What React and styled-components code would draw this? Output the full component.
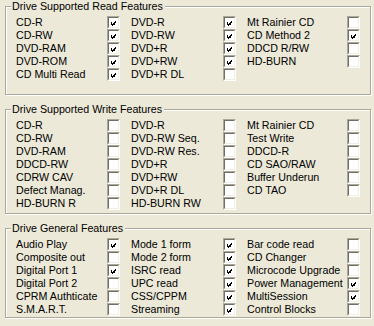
import React from 'react';
import styled, {createGlobalStyle} from "styled-components";

const GlobalStyle = createGlobalStyle`
  html, body {
    margin: 0;
    padding: 0;
    background: #ece9d8;
  }
  body {
    font-family: "Liberation Sans", Arial, sans-serif;
    font-size: 10.7px;
    color: #000;
  }
`;

//feature lists, [label, checked]
const groups = [
    {
        title: "Drive Supported Read Features",
        bottom: 13,
        columns: [
            [["CD-R", true], ["CD-RW", true], ["DVD-RAM", true], ["DVD-ROM", true], ["CD Multi Read", true]],
            [["DVD-R", true], ["DVD-RW", true], ["DVD+R", true], ["DVD+RW", true], ["DVD+R DL", false]],
            [["Mt Rainier CD", false], ["CD Method 2", true], ["DDCD R/RW", false], ["HD-BURN", false]],
        ],
    },
    {
        title: "Drive Supported Write Features",
        bottom: 3,
        columns: [
            [["CD-R", false], ["CD-RW", false], ["DVD-RAM", false], ["DDCD-RW", false], ["CDRW CAV", false], ["Defect Manag.", false], ["HD-BURN R", false]],
            [["DVD-R", false], ["DVD-RW Seq.", false], ["DVD-RW Res.", false], ["DVD+R", false], ["DVD+RW", false], ["DVD+R DL", false], ["HD-BURN RW", false]],
            [["Mt Rainier CD", false], ["Test Write", false], ["DDCD-R", false], ["CD SAO/RAW", false], ["Buffer Underun", false], ["CD TAO", false]],
        ],
    },
    {
        title: "Drive General Features",
        bottom: 1,
        columns: [
            [["Audio Play", true], ["Composite out", false], ["Digital Port 1", true], ["Digital Port 2", false], ["CPRM Authticate", false], ["S.M.A.R.T.", false]],
            [["Mode 1 form", true], ["Mode 2 form", true], ["ISRC read", true], ["UPC read", true], ["CSS/CPPM", true], ["Streaming", true]],
            [["Bar code read", false], ["CD Changer", false], ["Microcode Upgrade", false], ["Power Management", true], ["MultiSession", true], ["Control Blocks", false]],
        ],
    },
];

const CheckMark = () => (
    <svg width="7" height="7" viewBox="0 0 7 7" shapeRendering="crispEdges">
        <path
            fill="#000"
            d="M6 0h1v1h-1z M5 1h2v1h-2z M0 2h1v1h-1z M4 2h3v1h-3z M0 3h2v1h-2z M3 3h3v1h-3z M0 4h5v1h-5z M1 5h3v1h-3z M2 6h1v1h-1z"
        />
    </svg>
);

const Check = ({checked}) => (
    <StyledBox>
        <StyledFace>{checked && <CheckMark />}</StyledFace>
    </StyledBox>
);

const Group = ({group}) => {
    const rows = Math.max(...group.columns.map(c => c.length));
    const cells = [];
    for (let r = 0; r < rows; r++) {
        group.columns.forEach((col, c) => {
            const item = col[r];
            cells.push(
                <StyledLabel key={`l${r}-${c}`} $indent={c > 0}>{item ? item[0] : ""}</StyledLabel>,
                <StyledCell key={`c${r}-${c}`}>{item && <Check checked={item[1]} />}</StyledCell>
            );
        });
    }
    return (
        <StyledGroup $bottom={group.bottom}>
            <StyledTitle>{group.title}</StyledTitle>
            <StyledGrid>{cells}</StyledGrid>
        </StyledGroup>
    );
};

const App = () => {
    return (
        <>
            <GlobalStyle />
            <StyledPage>
                {groups.map(g => (
                    <Group key={g.title} group={g} />
                ))}
            </StyledPage>
        </>
    );
};

const StyledPage = styled.div`
  width: 374px;
  height: 326px;
  box-sizing: border-box;
  padding: 6px 3px 0 5px;
  display: flex;
  flex-direction: column;
  gap: 14px;
`;
const StyledGroup = styled.div`
  position: relative;
  border: 1px solid #aca899;
  box-shadow: inset 1px 1px 0 #fff, 1px 1px 0 #fff;
  padding: 9px 0 ${p => p.$bottom}px 10px;
`;
const StyledTitle = styled.div`
  position: absolute;
  top: -7px;
  left: 5px;
  padding: 0 2px 0 1px;
  line-height: 13px;
  background: #ece9d8;
  white-space: nowrap;
`;
const StyledGrid = styled.div`
  display: grid;
  grid-template-columns: 91px 13px 103px 13px 111px 13px;
  grid-auto-rows: 13px;
`;
const StyledLabel = styled.div`
  line-height: 13px;
  white-space: nowrap;
  padding-left: ${p => (p.$indent ? 11 : 0)}px;
`;
const StyledCell = styled.div`
  width: 13px;
  height: 13px;
`;
const StyledBox = styled.div`
  width: 13px;
  height: 13px;
  box-sizing: border-box;
  border: 1px solid;
  border-color: #aca899 #fff #fff #aca899;
  background: #fff;
`;
const StyledFace = styled.div`
  width: 11px;
  height: 11px;
  box-sizing: border-box;
  border: 1px solid;
  border-color: #716f64 #f1efe2 #f1efe2 #716f64;
  background: #fff;
  padding: 2px;
  display: flex;
  svg {
    display: block;
  }
`;

export default App;
